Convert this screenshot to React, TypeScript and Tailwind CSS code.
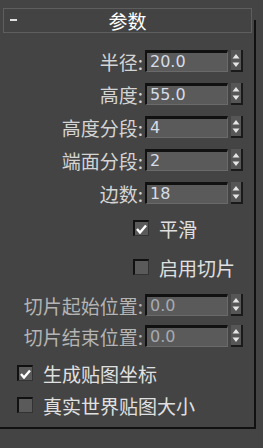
const labelFont = { fontFamily: '"Noto Sans CJK SC", "Noto Sans", sans-serif' };
const numFont = { fontFamily: '"DejaVu Sans", Verdana, sans-serif' };

function Spinner() {
  return (
    <div className="ml-[3px] h-[22px] w-[12px] bg-[#565656] border-r-2 border-b-2 border-[#1a1a1a] flex items-center justify-center">
      <svg width="8" height="15" viewBox="0 0 8 15">
        <path d="M4 1 L7.5 5.5 L0.5 5.5 Z" fill="#e6e6e6" />
        <path d="M4 14 L7.5 9.5 L0.5 9.5 Z" fill="#e6e6e6" />
      </svg>
    </div>
  );
}

function NumRow({ label, value, disabled, mt }: { label: string; value: string; disabled?: boolean; mt: string }) {
  return (
    <div className={`flex items-center h-[22px] ${mt}`}>
      <div
        className={`w-[143px] text-right text-[19px] leading-none whitespace-nowrap ${disabled ? 'text-[#b4b4b4]' : 'text-[#d4d4d4]'}`}
        style={labelFont}
      >
        {label}:
      </div>
      <div className="ml-[2px] h-[22px] w-[83px] bg-[#5a5a5a] border-t-[3px] border-l-2 border-t-[#111] border-l-[#111] border-r border-b border-r-[#6a6a6a] border-b-[#6a6a6a] flex items-center pl-[3px]">
        <span
          className={`text-[16px] leading-none ${disabled ? 'text-[#a6aab0]' : 'text-[#d6dce6]'}`}
          style={numFont}
        >
          {value}
        </span>
      </div>
      <Spinner />
    </div>
  );
}

function Check({ checked, label, className }: { checked?: boolean; label: string; className: string }) {
  return (
    <div className={`flex items-center h-[16px] ${className}`}>
      <div className="h-[16px] w-[16px] shrink-0 bg-[#5a5a5a] border-t-2 border-l-2 border-[#111] border-r border-b border-r-[#333] border-b-[#333] flex items-center justify-center">
        {checked && (
          <svg width="11" height="10" viewBox="0 0 11 10">
            <path d="M1 5 L4 8.5 L10 1.5" stroke="#ffffff" strokeWidth="2.4" fill="none" />
          </svg>
        )}
      </div>
      <span className="ml-[10px] text-[19px] leading-none text-[#e0e0e0] whitespace-nowrap" style={labelFont}>
        {label}
      </span>
    </div>
  );
}

export default function App() {
  return (
    <div className="w-[263px] h-[448px] bg-[#444444] overflow-hidden relative">
      {/* rollout header */}
      <div className="flex pt-[8px]">
        <div className="ml-[3px] w-[249px] h-[25px] border border-[#5e5e5e] bg-[#434343] flex items-center relative">
          <span className="absolute left-[6px] top-[10px] w-[7px] h-[2px] bg-[#e0e0e0]" />
          <span className="mx-auto text-[19px] leading-none text-white" style={labelFont}>
            参数
          </span>
        </div>
        <div className="ml-[2px] mt-[12px] w-[2px] h-[13px] bg-[#111]" />
      </div>

      {/* rollout body */}
      <div className="w-[256px] h-[396px] border-r-2 border-b-2 border-[#111] flex flex-col">
        <NumRow label="半径" value="20.0" mt="mt-[17px]" />
        <NumRow label="高度" value="55.0" mt="mt-[11px]" />
        <NumRow label="高度分段" value="4" mt="mt-[11px]" />
        <NumRow label="端面分段" value="2" mt="mt-[11px]" />
        <NumRow label="边数" value="18" mt="mt-[11px]" />

        <Check checked label="平滑" className="ml-[133px] mt-[16px]" />
        <Check label="启用切片" className="ml-[133px] mt-[23px]" />

        <NumRow label="切片起始位置" value="0.0" disabled mt="mt-[19px]" />
        <NumRow label="切片结束位置" value="0.0" disabled mt="mt-[9px]" />

        <Check checked label="生成贴图坐标" className="ml-[17px] mt-[18px]" />
        <Check label="真实世界贴图大小" className="ml-[17px] mt-[16px]" />
      </div>
    </div>
  );
}
